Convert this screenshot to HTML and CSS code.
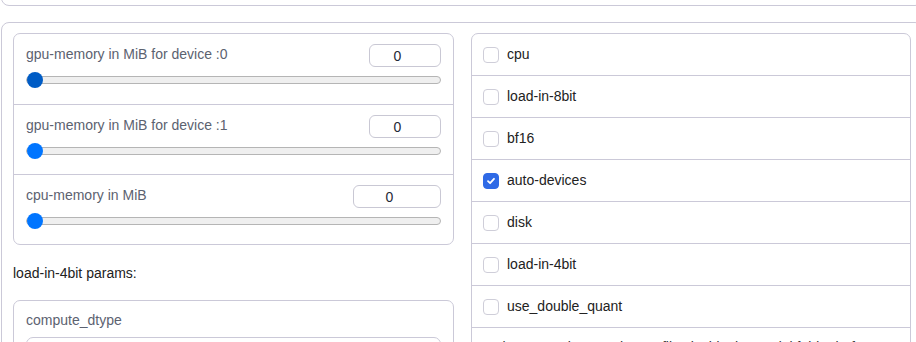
FILE: index.html
```html
<!DOCTYPE html>
<html lang="en">
<head>
    <meta charset="UTF-8">
    <meta name="viewport" content="width=device-width, initial-scale=1.0">
    <title>Model loader settings</title>
    <link rel="stylesheet" href="styles.css">
</head>
<body>
    <div class="page">
        <div class="top-box"></div>

        <div class="settings">
            <div class="column">
                <div class="panel">
                    <div class="slider-row">
                        <div class="slider-head">
                            <label class="field-label">gpu-memory in MiB for device :0</label>
                            <input type="number" class="num-input" value="0">
                        </div>
                        <input type="range" class="slider slider-active" min="0" max="24000" value="0">
                    </div>
                    <div class="slider-row">
                        <div class="slider-head">
                            <label class="field-label">gpu-memory in MiB for device :1</label>
                            <input type="number" class="num-input" value="0">
                        </div>
                        <input type="range" class="slider" min="0" max="24000" value="0">
                    </div>
                    <div class="slider-row">
                        <div class="slider-head">
                            <label class="field-label">cpu-memory in MiB</label>
                            <input type="number" class="num-input num-input-wide" value="0">
                        </div>
                        <input type="range" class="slider" min="0" max="64000" value="0">
                    </div>
                </div>

                <p class="section-note">load-in-4bit params:</p>

                <div class="panel">
                    <div class="dropdown-row">
                        <label class="field-label">compute_dtype</label>
                        <div class="dropdown"></div>
                    </div>
                </div>
            </div>

            <div class="column">
                <div class="panel check-panel">
                    <div class="check-row"><span class="box"></span><span class="check-label">cpu</span></div>
                    <div class="check-row"><span class="box"></span><span class="check-label">load-in-8bit</span></div>
                    <div class="check-row"><span class="box"></span><span class="check-label">bf16</span></div>
                    <div class="check-row">
                        <span class="box box-checked">
                            <svg width="10" height="10" viewBox="0 0 10 10"><path d="M2 5.2 L4.1 7.2 L8 2.8" fill="none" stroke="#fff" stroke-width="1.8" stroke-linecap="round" stroke-linejoin="round"/></svg>
                        </span>
                        <span class="check-label">auto-devices</span>
                    </div>
                    <div class="check-row"><span class="box"></span><span class="check-label">disk</span></div>
                    <div class="check-row"><span class="box"></span><span class="check-label">load-in-4bit</span></div>
                    <div class="check-row"><span class="box"></span><span class="check-label">use_double_quant</span></div>
                    <div class="info-row">Make sure to inspect the .py files inside the model folder before loading it with --trust-remote-code.</div>
                </div>
            </div>
        </div>
    </div>
</body>
</html>
```

FILE: styles.css
```css
* {
    box-sizing: border-box;
    margin: 0;
    padding: 0;
    font-family: "Liberation Sans", Arial, sans-serif;
}

body {
    background-color: #fff;
    overflow: hidden;
    font-size: 14px;
    line-height: 16px;
}

.page {
    width: 922px;
    margin-left: 1px;
}

.top-box {
    height: 30px;
    margin-top: -24px;
    border: 1px solid #cbc9d8;
    border-radius: 8px;
}

.settings {
    margin-top: 16px;
    border: 1px solid #cbc9d8;
    border-radius: 8px;
    padding: 10px 11px;
    display: grid;
    grid-template-columns: 441px 440px;
    gap: 17px;
    height: 340px;
}

.panel {
    border: 1px solid #cbc9d8;
    border-radius: 7px;
    background-color: #fff;
}

.slider-row {
    height: 70px;
    padding: 10px 12px 0;
}

.slider-row + .slider-row {
    border-top: 1px solid #cbc9d8;
}

.slider-head {
    display: flex;
    justify-content: space-between;
    align-items: flex-start;
}

.field-label {
    color: #5c6270;
    padding-top: 2px;
}

.num-input {
    width: 72px;
    height: 23px;
    border: 1px solid #c9c8d4;
    border-radius: 6px;
    text-align: center;
    font-size: 14px;
    color: #1f2937;
    outline: none;
}

.num-input-wide {
    width: 88px;
}

.slider {
    -webkit-appearance: none;
    appearance: none;
    display: block;
    width: 100%;
    height: 16px;
    margin-top: 5px;
    background: transparent;
}

.slider::-webkit-slider-runnable-track {
    height: 8px;
    background-color: #efefef;
    border: 1px solid #b5b5b5;
    border-radius: 4px;
}

.slider::-webkit-slider-thumb {
    -webkit-appearance: none;
    width: 16px;
    height: 16px;
    margin-top: -5px;
    border-radius: 50%;
    background-color: #0075ff;
    border: none;
}

.slider-active::-webkit-slider-thumb {
    background-color: #005cc5;
}

.section-note {
    margin: 20px 0 19px;
    color: #222;
}

.dropdown-row {
    padding: 9px 12px 0;
}

.dropdown-row .field-label {
    display: block;
    margin-bottom: 9px;
}

.dropdown {
    height: 32px;
    border: 1px solid #cbc9d8;
    border-radius: 7px;
}

.check-panel {
    overflow: hidden;
}

.check-row {
    height: 42px;
    border-bottom: 1px solid #cbc9d8;
    padding-left: 11px;
    display: flex;
    align-items: center;
    gap: 8px;
}

.box {
    width: 16px;
    height: 16px;
    border: 1px solid #cfced9;
    border-radius: 4px;
    background-color: #fff;
    display: flex;
    align-items: center;
    justify-content: center;
}

.box-checked {
    background-color: #2f6ae6;
    border-color: #2f6ae6;
}

.check-label {
    color: #222;
    padding-bottom: 1px;
}

.info-row {
    padding: 11px 11px 10px;
    color: #333;
}
```
